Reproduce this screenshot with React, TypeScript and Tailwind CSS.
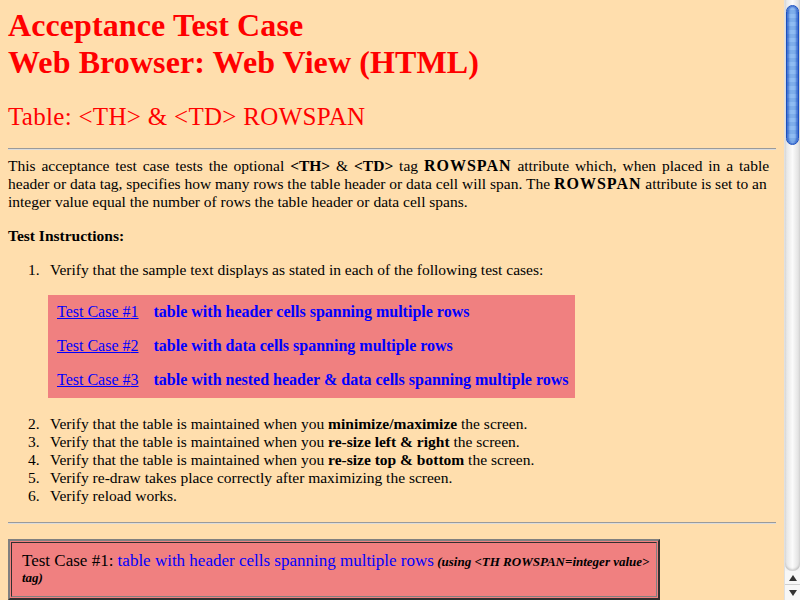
import React from 'react';

const serif = { fontFamily: '"Liberation Serif", "Times New Roman", serif' };

const cases = [
  { id: 1, text: 'table with header cells spanning multiple rows' },
  { id: 2, text: 'table with data cells spanning multiple rows' },
  { id: 3, text: 'table with nested header & data cells spanning multiple rows' },
];

const Scrollbar: React.FC = () => (
  <div className="w-[16px] h-[600px] flex flex-col bg-[#f4f4f4] border-l border-[#e0e0e0]">
    <div className="flex-1 flex flex-col rounded-b-[7px] bg-gradient-to-r from-[#e2e2e2] via-[#fbfbfb] to-[#dcdcdc] shadow-[inset_0_-2px_2px_rgba(0,0,0,0.15)]">
      <div className="mt-[5px] mx-[1px] h-[140px] rounded-[7px] border border-[#1a4fc0] bg-[repeating-linear-gradient(180deg,#8fbcf2_0px,#8fbcf2_4px,#7eaeea_4px,#7eaeea_8px)] shadow-[inset_2px_0_2px_rgba(20,70,190,0.6),inset_-2px_0_2px_rgba(20,70,190,0.6)]" />
    </div>
    <div className="h-[14px] flex items-center justify-center border-b border-[#cfcfcf] bg-[#f7f7f7]">
      <svg width="8" height="6" viewBox="0 0 8 6"><path d="M4 0 L8 6 L0 6 Z" fill="#333" /></svg>
    </div>
    <div className="h-[15px] flex items-center justify-center bg-[#f7f7f7]">
      <svg width="8" height="6" viewBox="0 0 8 6"><path d="M0 0 L8 0 L4 6 Z" fill="#333" /></svg>
    </div>
  </div>
);

const Item: React.FC<{ n: number; children: React.ReactNode }> = ({ n, children }) => (
  <li className="flex">
    <span className="w-[22px] shrink-0">{n}.</span>
    <div>{children}</div>
  </li>
);

const App: React.FC = () => {
  return (
    <div className="w-[800px] h-[600px] overflow-hidden flex bg-[#ffdead] text-black" style={serif}>
      <div className="w-[784px] h-[600px] overflow-hidden px-[8px] pt-[7px]">
        <h1 className="text-[32px] leading-[37px] font-bold tracking-[0.1px] text-[#ff0000]">
          Acceptance Test Case
          <br />
          Web Browser: Web View (HTML)
        </h1>
        <h2 className="mt-[21px] text-[25px] leading-[29px] tracking-[0.3px] text-[#ff0000]">
          Table: &lt;TH&gt; &amp; &lt;TD&gt; ROWSPAN
        </h2>
        <div className="mt-[17px] border-t border-b border-t-[#9a9a9a] border-b-[#dcdcdc]" />

        <p className="mt-[7px] text-[15.5px] leading-[18px]">
          <span className="[word-spacing:2px]">
            This acceptance test case tests the optional <b>&lt;TH&gt;</b> &amp; <b>&lt;TD&gt;</b> tag{' '}
            <b className="text-[16px] tracking-[1px]">ROWSPAN</b> attribute which, when placed in a table
          </span>
          <br />
          header or data tag, specifies how many rows the table header or data cell will span. The{' '}
          <b className="text-[16px] tracking-[1px]">ROWSPAN</b> attribute is set to an
          <br />
          integer value equal the number of rows the table header or data cell spans.
        </p>

        <p className="mt-[16px] text-[15.5px] leading-[18px] font-bold">Test Instructions:</p>

        <ol className="mt-[16px] pl-[20px] text-[15.5px] leading-[18px]">
          <Item n={1}>
            Verify that the sample text displays as stated in each of the following test cases:
            <div className="mt-[16px] mb-[17px] -ml-[2px] w-fit bg-[#f08080] pl-[9px] pr-[6px] pt-[8px] pb-[9px] grid grid-cols-[auto_auto] gap-x-[15px] gap-y-[16px] text-[16px] whitespace-nowrap">
              {cases.map((c) => (
                <React.Fragment key={c.id}>
                  <a href="#" className="text-[#0000ff] underline">
                    Test Case #{c.id}
                  </a>
                  <span className="text-[#0000ff] font-bold">{c.text}</span>
                </React.Fragment>
              ))}
            </div>
          </Item>
          <Item n={2}>
            Verify that the table is maintained when you <b>minimize/maximize</b> the screen.
          </Item>
          <Item n={3}>
            Verify that the table is maintained when you <b>re-size left &amp; right</b> the screen.
          </Item>
          <Item n={4}>
            Verify that the table is maintained when you <b>re-size top &amp; bottom</b> the screen.
          </Item>
          <Item n={5}>Verify re-draw takes place correctly after maximizing the screen.</Item>
          <Item n={6}>Verify reload works.</Item>
        </ol>

        <div className="mt-[17px] border-t border-b border-t-[#9a9a9a] border-b-[#dcdcdc]" />

        <div className="mt-[15px] w-[652px] bg-[#f08080] border-2 border-t-[#808080] border-l-[#808080] border-r-[#303030] border-b-[#303030] p-[1px]">
          <div className="border border-t-[#303030] border-l-[#303030] border-r-[#808080] border-b-[#808080] pt-[10px] pb-[10px] pl-[10px] pr-[2px] text-[13px] leading-[16px]">
            <span className="text-[17px]">Test Case #1: </span>
            <span className="text-[17px] text-[#0000ff]">table with header cells spanning multiple rows</span>{' '}
            <b className="italic">(using &lt;TH ROWSPAN=integer value&gt; tag)</b>
          </div>
        </div>
      </div>
      <Scrollbar />
    </div>
  );
};

export default App;
